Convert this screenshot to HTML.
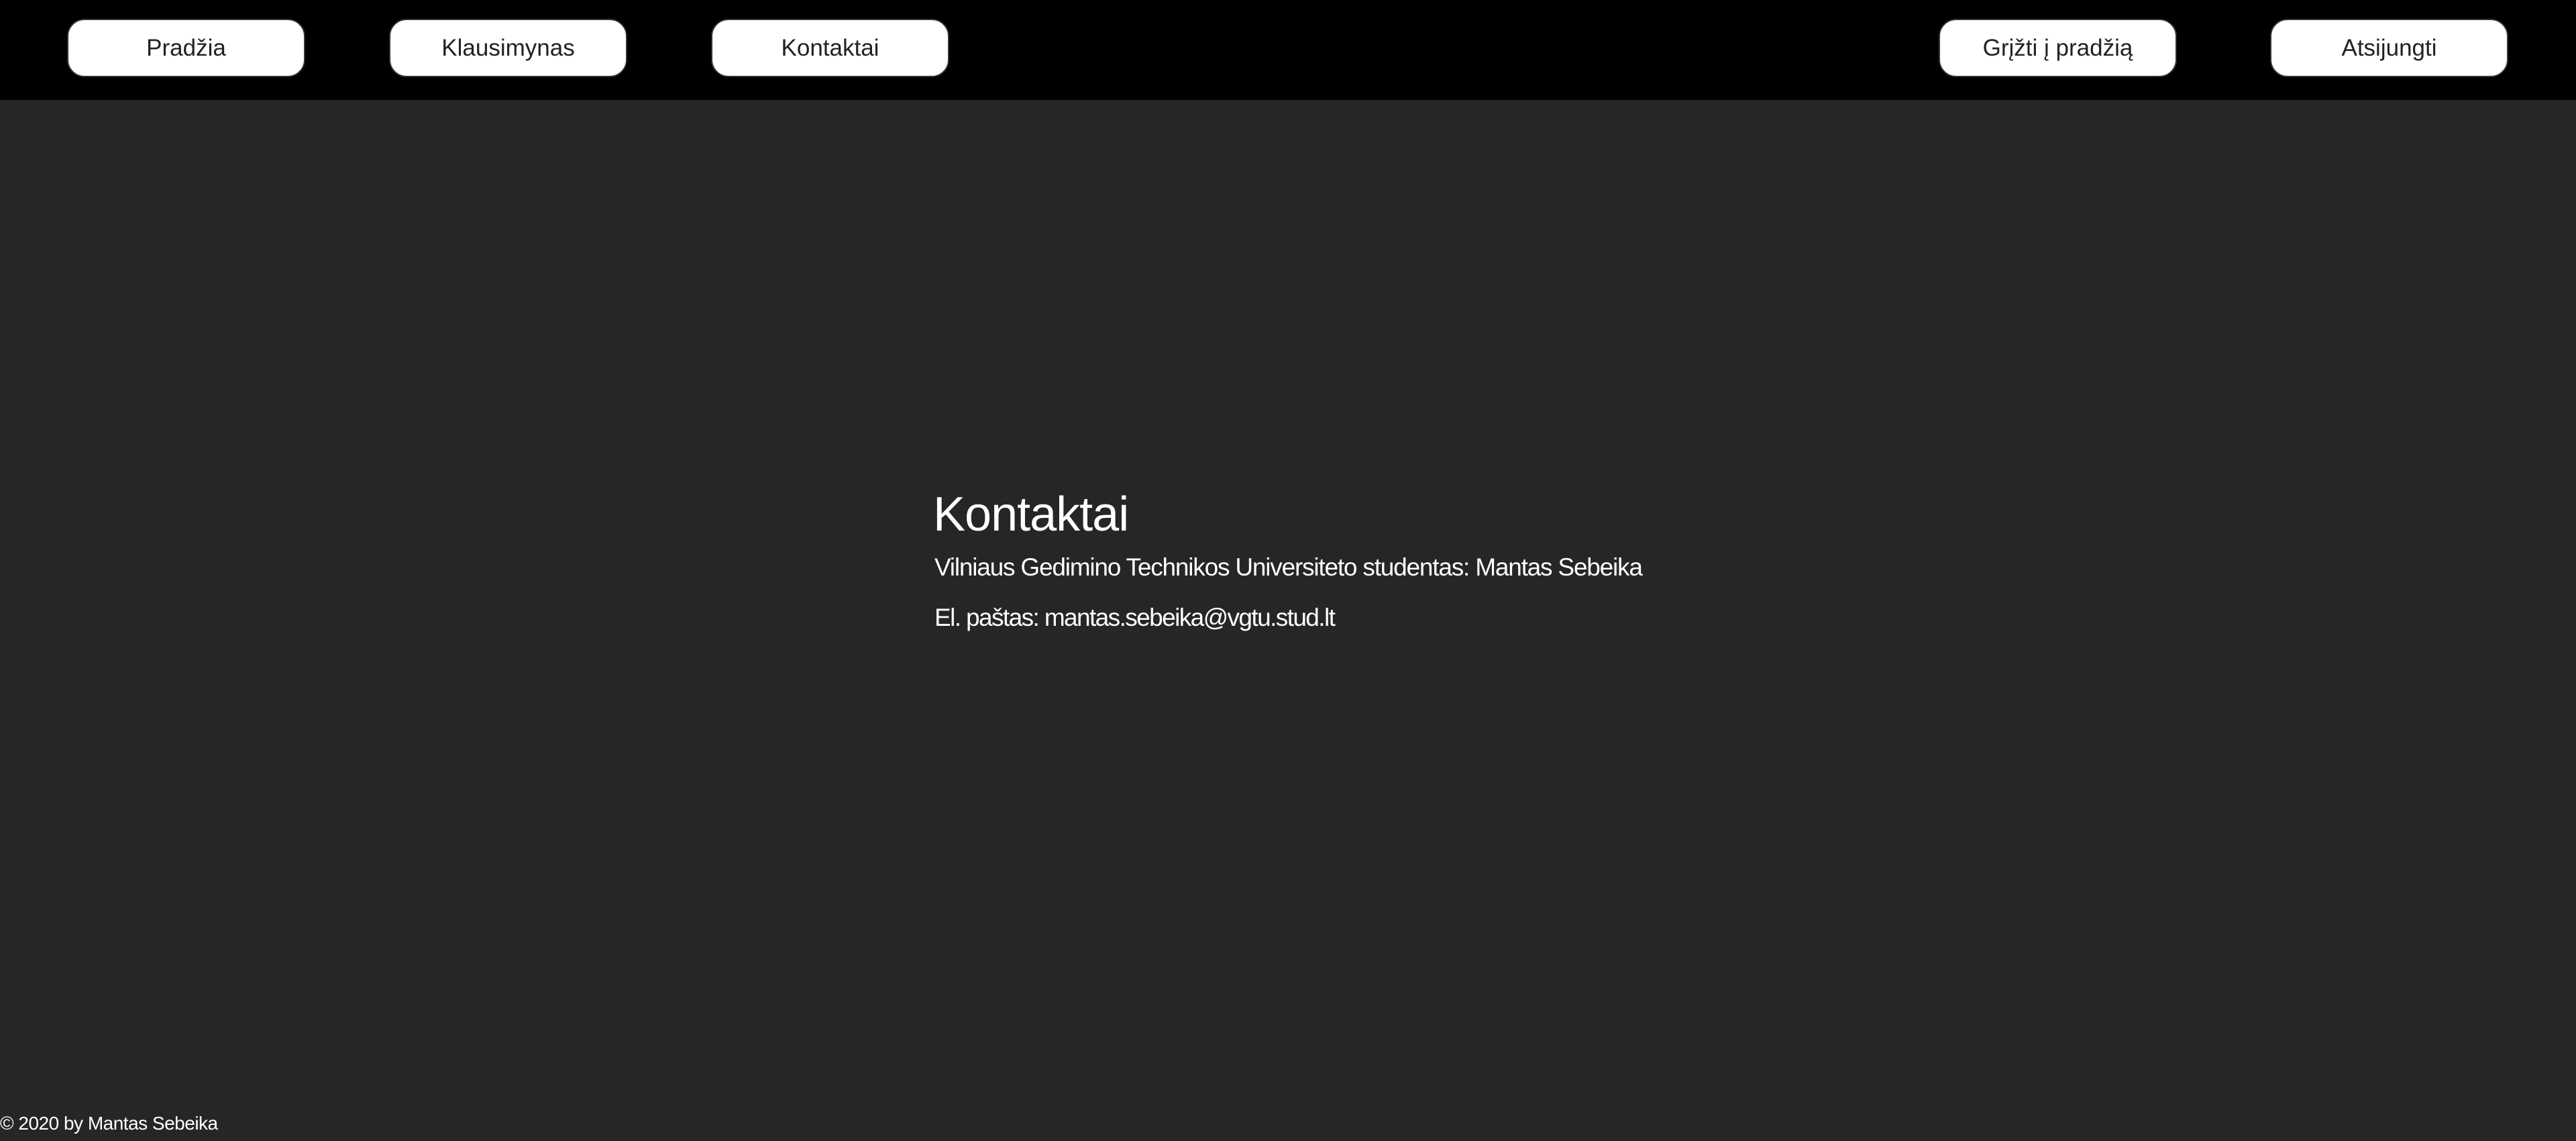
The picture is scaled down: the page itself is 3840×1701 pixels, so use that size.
<!DOCTYPE html>
<html><head><meta charset="utf-8"><style>
html,body{margin:0;padding:0;width:3840px;height:1701px;overflow:hidden;background:#262626;font-family:"Liberation Sans",sans-serif;}
.hdr{position:absolute;left:0;top:0;width:3840px;height:149px;background:#000;}
.btn{position:absolute;top:28px;width:355px;height:87px;background:#fff;border:2px solid #333;border-radius:26px;box-sizing:border-box;color:#222;font-size:35px;line-height:83px;text-align:center;}
.t{position:absolute;color:#fff;white-space:nowrap;}
</style></head><body>
<div class="hdr">
<div class="btn" style="left:100px">Pradžia</div>
<div class="btn" style="left:580px">Klausimynas</div>
<div class="btn" style="left:1060px">Kontaktai</div>
<div class="btn" style="left:2890px">Grįžti į pradžią</div>
<div class="btn" style="left:3384px">Atsijungti</div>
</div>
<div class="t" style="left:1391px;top:722px;font-size:72px;line-height:90px;letter-spacing:-1px">Kontaktai</div>
<div class="t" style="left:1393px;top:824px;font-size:37px;line-height:44px;letter-spacing:-1.2px">Vilniaus Gedimino Technikos Universiteto studentas: Mantas Sebeika</div>
<div class="t" style="left:1393px;top:899px;font-size:37px;line-height:44px;letter-spacing:-1.6px">El. paštas: mantas.sebeika@vgtu.stud.lt</div>
<div class="t" style="left:0px;top:1657px;font-size:28px;line-height:36px;letter-spacing:-0.5px">© 2020 by Mantas Sebeika</div>
</body></html>
